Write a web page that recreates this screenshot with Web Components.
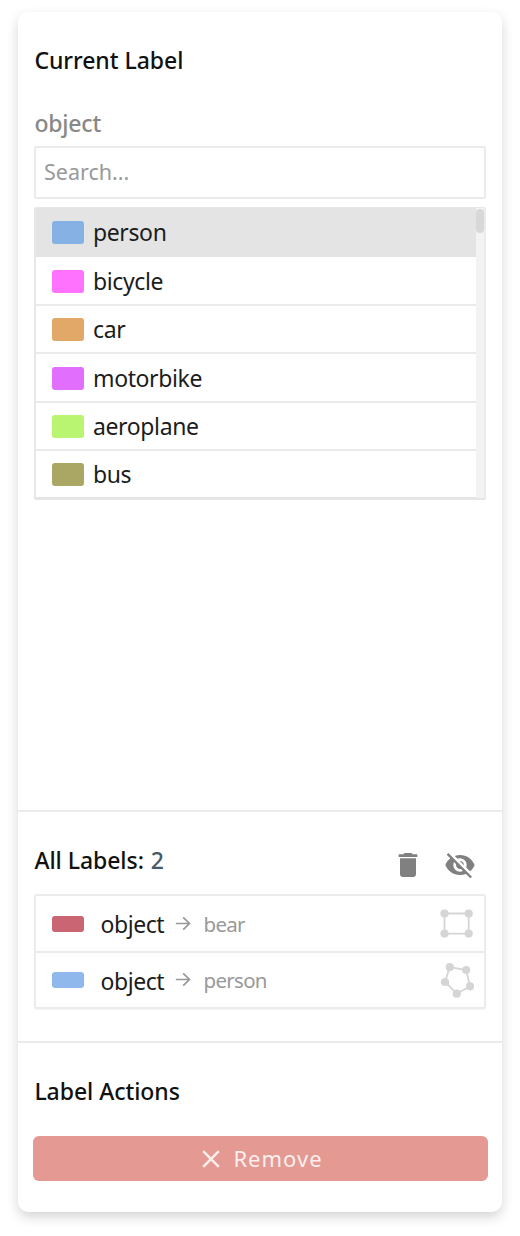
<!DOCTYPE html>
<html lang="en">
<head>
<meta charset="utf-8">
<title>Labels</title>
<style>
html, body { margin: 0; background: #fff; }
body { font-family: "Noto Sans", "Open Sans", sans-serif; font-size: 23px; color: #1c1c1c; }
</style>
</head>
<body>
<label-sidebar></label-sidebar>
<script>
const define = (name, html, setup) => customElements.define(name, class extends HTMLElement {
  connectedCallback() {
    if (this.shadowRoot) return;
    const t = document.createElement('template');
    t.innerHTML = html;
    this.attachShadow({ mode: 'open' }).appendChild(t.content.cloneNode(true));
    if (setup) setup(this, this.shadowRoot);
  }
});

define('panel-section', `
<style>
:host { display: block; box-sizing: border-box; padding: 0 16px; }
:host([divided]) { border-top: 2px solid #ebebeb; }
header { display: flex; justify-content: space-between; align-items: center; height: 30px; }
h2 { margin: 2px 0 0 .4px; font-size: 23px; line-height: 30px; font-weight: 500; color: #111; white-space: pre; letter-spacing: -.05px; }
</style>
<header><h2><slot name="title"></slot></h2><slot name="tools"></slot></header>
<slot></slot>`);

define('search-box', `
<style>
:host { display: block; box-sizing: border-box; height: 53px; border: 2px solid #ebebeb; border-radius: 2px; padding: 0 8px; font-size: 21.5px; line-height: 47px; color: #999; }
</style><slot></slot>`);

define('class-list', `
<style>
:host { display: grid; grid-template-columns: 1fr 8px; box-sizing: border-box; height: 293px; border: 2px solid #e8e8e8; border-top-width: 1px; border-right-color: #ebebeb; border-bottom-color: #e6e6e6; border-radius: 2px; overflow: hidden; }
.rows { display: grid; grid-template-rows: 49px 48.8px repeat(3, 48.4px) 47px; min-width: 0; }
.track { background: #f3f3f3; }
.thumb { height: 24px; margin-top: 1px; border-radius: 4px; background: #d8d8d8; }
</style>
<div class="rows"><slot></slot></div><div class="track"><div class="thumb"></div></div>`);

define('class-option', `
<style>
:host { display: flex; align-items: center; gap: 9px; box-sizing: border-box; padding-left: 16px; border-bottom: 2px solid #ebebeb; line-height: 30px; letter-spacing: -.38px; }
:host([selected]) { background: #e4e4e4; border-color: #e4e4e4; }
i { width: 32px; height: 23px; border-radius: 3px; margin-top: 2px; }
span { padding-top: 1px; }
:host(:last-child) { border-bottom: 1px solid #e3e3e3; }
</style>
<i></i><span><slot></slot></span>`, (el, root) => { root.querySelector('i').style.background = el.getAttribute('color'); });

define('label-list', `
<style>
:host { display: block; box-sizing: border-box; height: 115px; border: 2px solid #ebebeb; border-radius: 3px; box-shadow: 0 1px 2px rgba(0,0,0,.05); }
</style><slot></slot>`);

define('label-row', `
<style>
:host { display: flex; align-items: center; box-sizing: border-box; height: 54px; padding: 0 10px 0 16px; }
:host(:first-child) { height: 57px; border-bottom: 2px solid #ebebeb; }
i { width: 32px; height: 16px; border-radius: 3px; margin-right: 16.5px; }
.name { width: 74.5px; line-height: 30px; padding-top: 1px; letter-spacing: -.45px; }
.arrow { width: 17px; height: 16px; margin-right: 11.5px; }
.value { flex: 1; font-size: 20.5px; line-height: 28px; color: #999; letter-spacing: -.7px; }
</style>
<i></i><span class="name"><slot></slot></span>
<svg class="arrow" viewBox="0 0 17 16" fill="none" stroke="#999" stroke-width="1.7"><path d="M.8 7.500H14.500M8.200 1.300L14.500 7.500L8.200 13.700"/></svg>
<span class="value"><slot name="value"></slot></span><slot name="shape"></slot>`, (el, root) => { root.querySelector('i').style.background = el.getAttribute('color'); });

define('shape-icon', `
<style>:host { display: block; width: 34px; height: 36px; } svg { display: block; }</style>
<svg width="34" height="36" fill="#d5d5d5" stroke="#d5d5d5"></svg>`, (el, root) => {
  const pts = el.getAttribute('kind') === 'box'
    ? [[4.5,7.5],[28.7,7.5],[28.7,27.6],[4.5,27.6]]
    : [[9.8,5.2],[26.2,8],[30,24.3],[16.8,31.7],[5,20]];
  root.querySelector('svg').innerHTML = '<polygon fill="none" stroke-width="1.8" points="' + pts.join(' ') + '"/>' +
    pts.map(p => '<circle stroke="none" r="4.1" cx="' + p[0] + '" cy="' + p[1] + '"/>').join('');
});

define('tool-icons', `
<style>:host { display: flex; gap: 20px; margin: 12px 10px 0 0; } svg { display: block; fill: #808080; }</style>
<svg width="32" height="32" viewBox="0 0 24 24"><path d="M6 19c0 1.1.9 2 2 2h8c1.100 0 2-.9 2-2V7H6v12zM19 4h-3.500l-1-1h-5l-1 1H5v2h14V4z"/></svg>
<svg width="32" height="32" viewBox="0 0 24 24"><path d="M12 7c2.760 0 5 2.240 5 5 0 .65-.13 1.260-.36 1.830l2.920 2.920c1.510-1.260 2.700-2.890 3.430-4.750-1.730-4.390-6-7.500-11-7.500-1.400 0-2.740.25-3.980.7l2.160 2.160C10.740 7.130 11.350 7 12 7zM2 4.270l2.280 2.280.46.46C3.080 8.300 1.780 10.020 1 12c1.730 4.390 6 7.500 11 7.500 1.550 0 3.030-.3 4.380-.84l.42.42L19.730 22 21 20.730 3.270 3 2 4.270zM7.530 9.800l1.550 1.550c-.05.21-.08.43-.08.65 0 1.660 1.340 3 3 3 .22 0 .44-.03.65-.08l1.550 1.550c-.67.33-1.410.53-2.200.53-2.760 0-5-2.240-5-5 0-.79.2-1.530.53-2.200zm4.310-.78l3.150 3.150.02-.16c0-1.660-1.340-3-3-3l-.17.01z"/></svg>`);

define('remove-button', `
<style>
:host { display: flex; align-items: center; justify-content: center; gap: 13px; height: 45px; padding-left: 5px; margin: 0 -1.5px; border-radius: 6px; background: #e49992; color: #fbefee; font-size: 22px; letter-spacing: 1px; line-height: 30px; }
svg { width: 18px; height: 18px; }
span { margin-top: -1px; }
</style>
<svg viewBox="0 0 18 18" stroke="#fbefee" stroke-width="2.5"><path d="M1.200 1.200L16.800 16.800M16.800 1.200L1.200 16.800"/></svg><span><slot></slot></span>`);

define('label-sidebar', `
<style>
:host { display: flex; flex-direction: column; box-sizing: border-box; width: 484px; height: 1200px; margin: 12px 18px 24px; background: #fff; border-radius: 10px; box-shadow: 0 5px 12px rgba(0,0,0,.17); }
.current { height: 798px; padding-top: 32px; }
.all { height: 231px; padding-top: 32px; }
.actions { flex: 1; padding-top: 32px; }
h3 { margin: 34px 0 8px .4px; font-size: 23px; line-height: 30px; font-weight: 500; color: #888; letter-spacing: -.2px; }
search-box { margin-bottom: 8px; }
.count { color: #455a64; margin-left: 1px; }
label-list { margin-top: 20px; }
remove-button { margin-top: 31px; }
</style>
<panel-section class="current">
  <span slot="title">Current Label</span>
  <h3>object</h3>
  <search-box>Search...</search-box>
  <class-list>
    <class-option selected color="#85b1e4">person</class-option>
    <class-option color="#ff72fd">bicycle</class-option>
    <class-option color="#e2a868">car</class-option>
    <class-option color="#e26efd">motorbike</class-option>
    <class-option color="#baf571">aeroplane</class-option>
    <class-option color="#a9a763">bus</class-option>
  </class-list>
</panel-section>
<panel-section class="all" divided>
  <span slot="title">All Labels: <span class="count">2</span></span>
  <tool-icons slot="tools"></tool-icons>
  <label-list>
    <label-row color="#ca6674">object<span slot="value">bear</span><shape-icon slot="shape" kind="box"></shape-icon></label-row>
    <label-row color="#8fb9ec">object<span slot="value">person</span><shape-icon slot="shape" kind="polygon"></shape-icon></label-row>
  </label-list>
</panel-section>
<panel-section class="actions" divided>
  <span slot="title">Label Actions</span>
  <remove-button>Remove</remove-button>
</panel-section>`);
</script>
</body>
</html>
